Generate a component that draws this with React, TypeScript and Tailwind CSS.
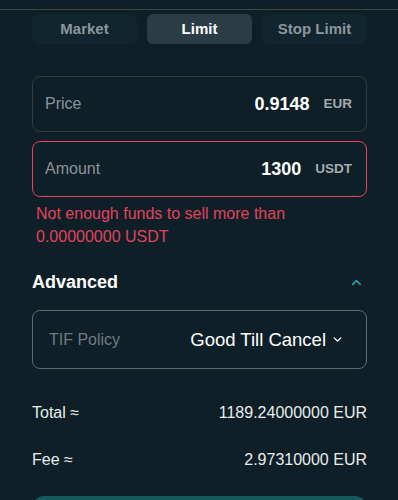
import { ChevronDown, ChevronUp } from "lucide-react";

const TABS = ["Market", "Limit", "Stop Limit"];

function Field({
  label,
  value,
  unit,
  error,
}: {
  label: string;
  value: string;
  unit: string;
  error?: boolean;
}) {
  return (
    <div
      className={`h-[56px] rounded-lg border flex items-center pl-3 pr-[14px] ${
        error ? "border-[#e2435d]" : "border-[#323d3e]"
      }`}
    >
      <span className="text-[16px] text-[#8a9497]">{label}</span>
      <span className="ml-auto text-[18px] font-bold text-white">{value}</span>
      <span className="ml-[14px] text-[13.5px] font-bold text-[#a3abae]">{unit}</span>
    </div>
  );
}

export default function App() {
  const active = "Limit";

  return (
    <div className="w-[398px] h-[500px] overflow-hidden bg-[#0e1f27] font-['Liberation_Sans',Arial,sans-serif]">
      <div className="h-[9px]" />
      <div className="h-px bg-[#3a4845]" />

      <div className="mt-1 mx-8 w-[335px] grid grid-cols-3 gap-[10px]">
        {TABS.map((t) => (
          <button
            key={t}
            type="button"
            className={`h-[30px] rounded-md text-[15px] font-bold ${
              t === active ? "bg-[#2a3d44] text-white" : "bg-[#10252e] text-[#8b9699]"
            }`}
          >
            {t}
          </button>
        ))}
      </div>

      <div className="mx-8 w-[335px] mt-8 flex flex-col gap-[9px]">
        <Field label="Price" value="0.9148" unit="EUR" />
        <Field label="Amount" value="1300" unit="USDT" error />
      </div>

      <p className="mx-8 w-[335px] px-1 mt-[5px] text-[16px] leading-[23px] text-[#e2435d]">
        Not enough funds to sell more than 0.00000000 USDT
      </p>

      <div className="mx-8 w-[335px] mt-[22px] h-6 flex items-center">
        <h3 className="text-[18px] font-bold text-white">Advanced</h3>
        <ChevronUp className="ml-auto mr-[3px] text-[#22a3ab]" size={15} strokeWidth={2.5} />
      </div>

      <div className="mx-8 w-[335px] mt-4 h-[59px] rounded-lg border border-[#5f6a6b] flex items-center pl-4 pr-[22px]">
        <span className="text-[16px] text-[#6f7b7e]">TIF Policy</span>
        <span className="ml-auto text-[18.5px] text-white">Good Till Cancel</span>
        <ChevronDown className="ml-[5px] text-white" size={13} strokeWidth={2.5} />
      </div>

      <div className="mx-8 w-[335px] mt-8 flex flex-col gap-[23px] text-[16px] leading-6 text-[#e8ecec]">
        <div className="flex justify-between">
          <span>Total ≈</span>
          <span>1189.24000000 EUR</span>
        </div>
        <div className="flex justify-between">
          <span>Fee ≈</span>
          <span>2.97310000 EUR</span>
        </div>
      </div>

      <button
        type="button"
        className="mx-8 w-[335px] mt-6 h-12 rounded-t-xl bg-[#17585e]"
      />
    </div>
  );
}
